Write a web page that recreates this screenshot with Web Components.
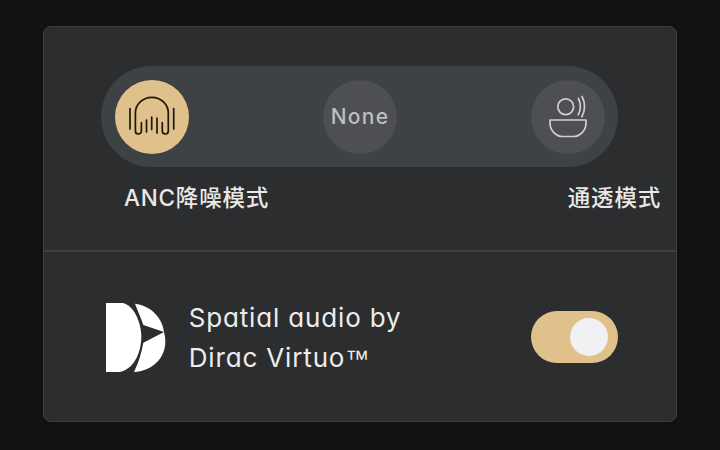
<!DOCTYPE html>
<html lang="zh">
<head>
<meta charset="utf-8">
<title>Audio settings</title>
<style>
    html, body { margin: 0; height: 100%; background: #111112; }
    body {
        width: 720px;
        height: 450px;
        overflow: hidden;
        font-family: "Inter", "Noto Sans CJK SC", sans-serif;
    }
</style>
</head>
<body>
<audio-panel>
    <mode-switch slot="modes">
        <mode-button active>
            <svg viewBox="0 0 74 74" width="74" height="74" fill="none" stroke="#20180e" stroke-width="1.7" stroke-linecap="round" stroke-linejoin="round">
                <path d="M15 28.500v20.500"/>
                <path d="M26.400 42.500v8.500a3 3 0 0 1-6 0V33a16.450 15.700 0 0 1 32.900 0v18a3 3 0 0 1-6 0v-8.500"/>
                <path d="M31.500 40v12"/>
                <path d="M36.700 37v12.500"/>
                <path d="M42 38v15"/>
                <path d="M58.700 28.500v20.500"/>
            </svg>
        </mode-button>
        <mode-button>None</mode-button>
        <mode-button>
            <svg viewBox="0 0 74 74" width="74" height="74" fill="none" stroke="#cfd0d0" stroke-width="1.7" stroke-linecap="round" stroke-linejoin="round">
                <circle cx="34.700" cy="26.700" r="7.900"/>
                <path d="M47.400 18.500c2.600 4.800 2.600 11.500-.2 16.200"/>
                <path d="M51 16.500c3.400 6.100 3.400 14.200-.2 20.200"/>
                <path d="M19 40h36v3c0 7.500-6 13.500-13 13.500H32c-7 0-13-6-13-13.500z"/>
            </svg>
        </mode-button>
    </mode-switch>
    <span slot="left-label">ANC降噪模式</span>
    <span slot="right-label">通透模式</span>
    <dirac-logo slot="logo"></dirac-logo>
    <span slot="title">Spatial audio by<br>Dirac Virtuo<span style="font-family:'Liberation Sans',sans-serif;letter-spacing:0;font-size:24px">™</span></span>
    <toggle-switch slot="toggle" on></toggle-switch>
</audio-panel>

<script>
class AudioPanel extends HTMLElement {
    constructor() {
        super()
        this.attachShadow({ mode: 'open' })
        this.shadowRoot.innerHTML = `
            <style>
                :host {
                    display: block;
                    padding: 26px 43px 28px;
                    color: #f1f1f1;
                }
                .card {
                    height: 396px;
                    box-sizing: border-box;
                    display: flex;
                    flex-direction: column;
                    background: #2c2d2f;
                    border: 1px solid #3c3d3f;
                    border-radius: 8px;
                }
                .top {
                    height: 225px;
                    box-sizing: border-box;
                    padding: 39px 58px 0 57px;
                    border-bottom: 2px solid #3f4042;
                }
                .labels {
                    display: flex;
                    justify-content: space-between;
                    margin: 16px -43px 0 23px;
                    font-size: 22.5px;
                    line-height: 30px;
                    letter-spacing: 0.8px;
                    font-weight: 500;
                    color: #e8e8e8;
                }
                .bottom {
                    flex: 1;
                    display: flex;
                    align-items: center;
                    padding: 0 58px 0 62px;
                }
                .title {
                    flex: 1;
                    margin: 4px 0 0 22px;
                    font-size: 26px;
                    line-height: 40px;
                    letter-spacing: 0.85px;
                    font-feature-settings: "cv11";
                    color: #ececec;
                }
            </style>
            <div class="card">
                <div class="top">
                    <slot name="modes"></slot>
                    <div class="labels">
                        <slot name="left-label"></slot>
                        <slot name="right-label"></slot>
                    </div>
                </div>
                <div class="bottom">
                    <slot name="logo"></slot>
                    <div class="title"><slot name="title"></slot></div>
                    <slot name="toggle"></slot>
                </div>
            </div>
        `
    }
}

class ModeSwitch extends HTMLElement {
    constructor() {
        super()
        this.attachShadow({ mode: 'open' })
        this.shadowRoot.innerHTML = `
            <style>
                :host {
                    display: flex;
                    justify-content: space-between;
                    align-items: center;
                    height: 101px;
                    box-sizing: border-box;
                    padding: 0 13px 0 14px;
                    background: #3f4245;
                    border-radius: 51px;
                }
            </style>
            <slot></slot>
        `
    }
}

class ModeButton extends HTMLElement {
    constructor() {
        super()
        this.attachShadow({ mode: 'open' })
        this.shadowRoot.innerHTML = `
            <style>
                :host {
                    display: flex;
                    align-items: center;
                    justify-content: center;
                    width: 74px;
                    height: 74px;
                    border-radius: 50%;
                    background: #4d4f52;
                    color: #bdbebf;
                    font-size: 21px;
                    font-weight: 500;
                    letter-spacing: 1.3px;
                }
                :host([active]) {
                    background: #e0c08b;
                }
                ::slotted(svg) {
                    display: block;
                }
            </style>
            <slot></slot>
        `
    }
}

class DiracLogo extends HTMLElement {
    constructor() {
        super()
        this.attachShadow({ mode: 'open' })
        this.shadowRoot.innerHTML = `
            <style>
                :host { display: block; width: 60.7px; height: 69.3px; margin-top: 2px; }
                svg { display: block; }
            </style>
            <svg viewBox="48 38 182 208" width="60.7" height="69.3" fill="#fff">
                <path d="M48 38H98C130 44 153 92 154 140C153 190 130 238 88 245H48Z"/>
                <path d="M135 40C185 46 218 85 222 125L160 104C153 84 143 60 135 40Z"/>
                <path d="M222 125C240 190 195 242 132 245C146 216 155 186 160 157Z"/>
            </svg>
        `
    }
}

class ToggleSwitch extends HTMLElement {
    constructor() {
        super()
        this.attachShadow({ mode: 'open' })
        this.shadowRoot.innerHTML = `
            <style>
                :host {
                    display: flex;
                    align-items: center;
                    justify-content: flex-end;
                    width: 87px;
                    height: 52px;
                    box-sizing: border-box;
                    padding-right: 10px;
                    border-radius: 26px;
                    background: #e0c08b;
                }
                .knob {
                    width: 38px;
                    height: 38px;
                    border-radius: 50%;
                    background: #f1f1f3;
                }
            </style>
            <div class="knob"></div>
        `
    }
}

customElements.define('audio-panel', AudioPanel)
customElements.define('mode-switch', ModeSwitch)
customElements.define('mode-button', ModeButton)
customElements.define('dirac-logo', DiracLogo)
customElements.define('toggle-switch', ToggleSwitch)
</script>
</body>
</html>
